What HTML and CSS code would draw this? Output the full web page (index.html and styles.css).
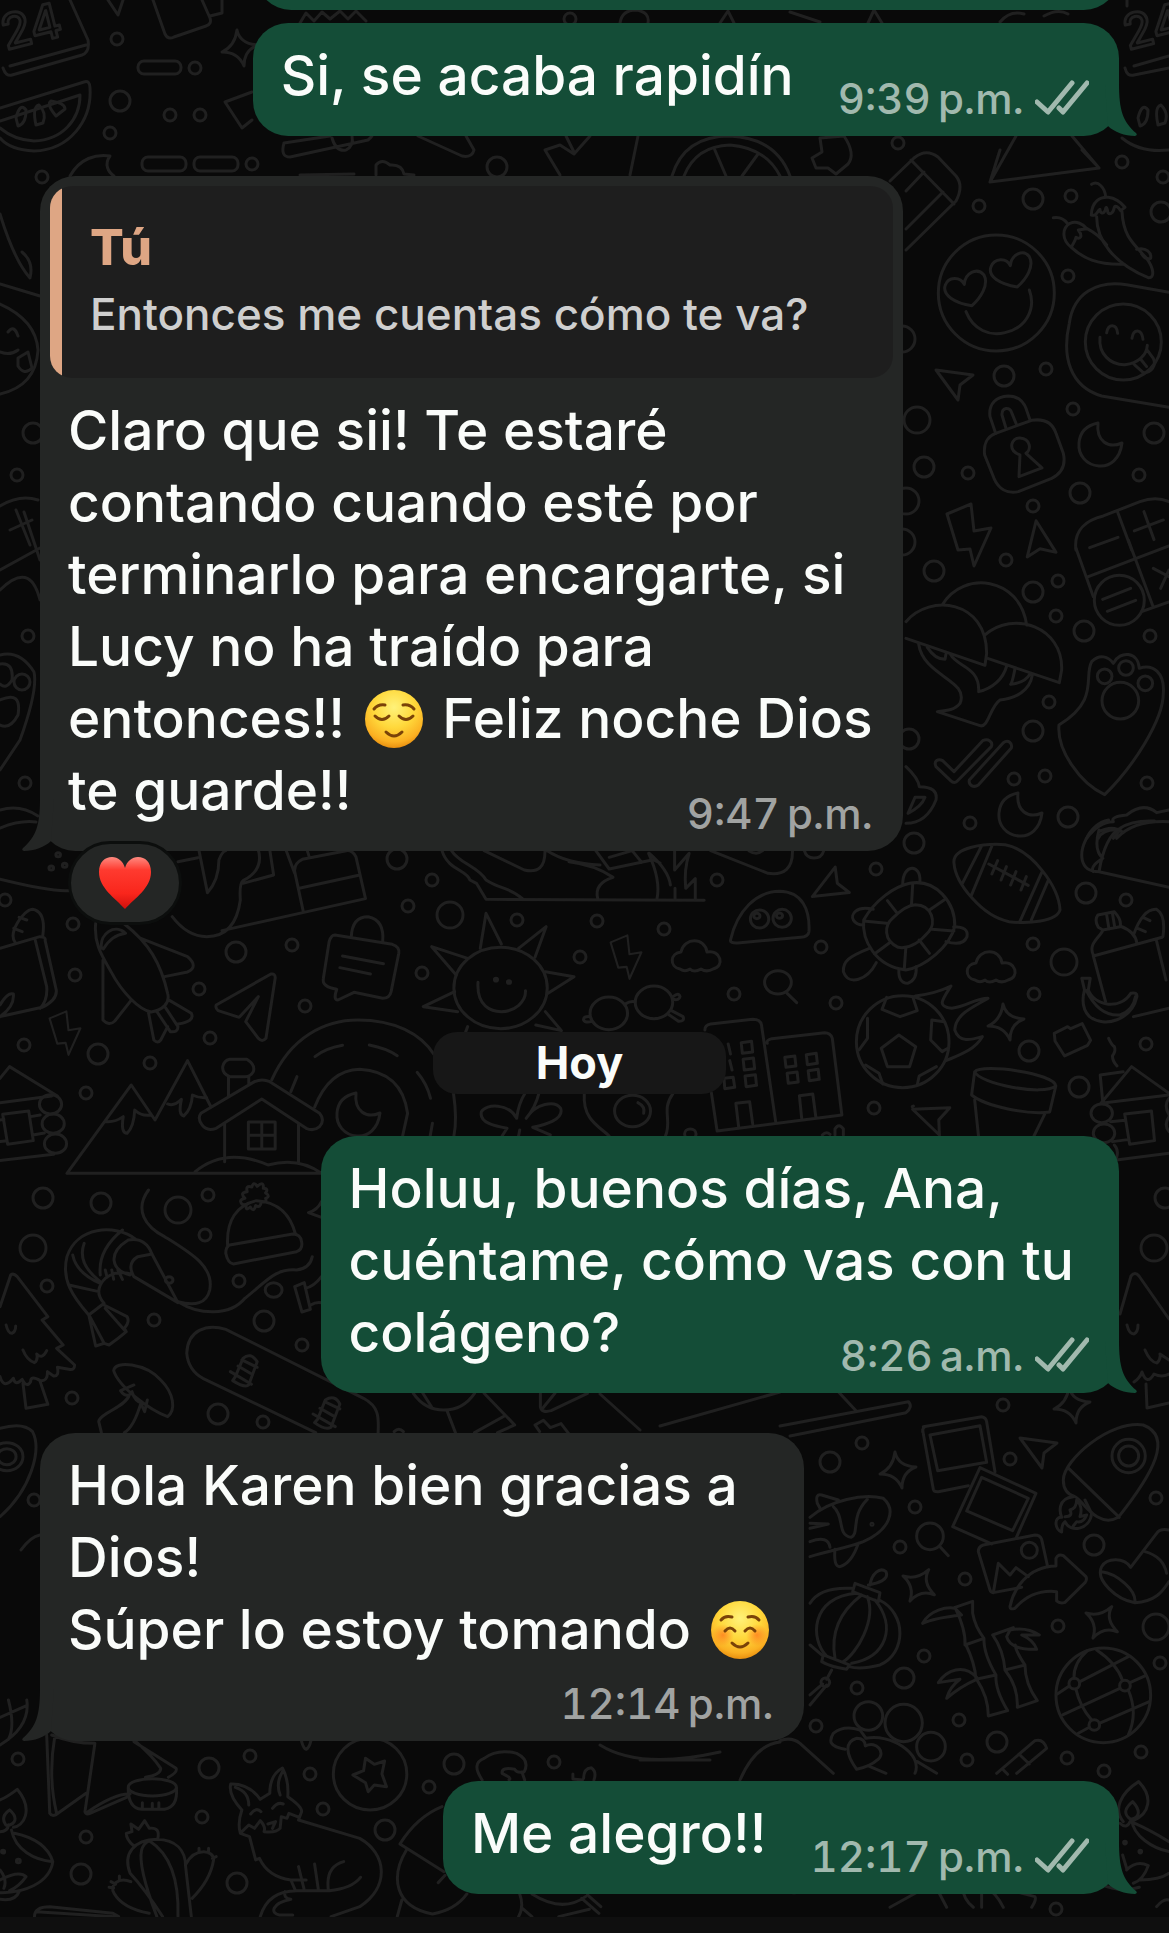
FILE: index.html
```
<!DOCTYPE html>
<html lang="es">
<head>
<meta charset="UTF-8">
<meta name="viewport" content="width=device-width, initial-scale=1">
<title>Chat</title>
<link rel="stylesheet" href="styles.css">
</head>
<body>

<!-- shared shapes -->
<svg class="defs" aria-hidden="true">
  <defs>
    <circle id="s" r="6"/>
    <circle id="m" r="10"/>
    <circle id="l" r="13"/>
    <path id="bolt" d="M-22,-38 L2,-48 L5,-21 L22,-24 L5,14 L1,-3 L-11,-2 Z"/>
    <path id="cursor" d="M-18,-10 L19,-5 L6,5 L4,20 Z"/>
    <path id="star" d="M-3,-18 Q0,-4 18,-3 Q4,2 4,18 Q-2,4 -18,4 Q-5,-2 -3,-18 Z"/>
    <path id="moon" d="M-2,-22 C-4,-4 8,4 22,-2 C20,14 10,22 -1,21 C-14,20 -22,10 -21,-2 C-20,-14 -12,-20 -2,-22 Z"/>
    <path id="cloud" d="M-17,12 C-28,10 -27,-4 -16,-5 C-13,-20 8,-20 10,-5 C24,-8 28,10 16,12 C11,15 7,14 4,12 C-1,15 -5,14 -7,12 C-10,14 -14,14 -17,12 Z"/>
    <path id="tail" d="M-14,-52 L0,-52 C0,-26 4,-14 17,-3 Q19,-1 16,0 C6,0 -5,-4 -11,-10 Z"/>
    <g id="ticks">
      <path d="M2,23 L13,33 L37,4"/>
      <path d="M24,29 L28,33 L52,4"/>
    </g>
    <radialGradient id="face" cx="50%" cy="30%" r="70%">
      <stop offset="0" stop-color="#fff27a"/>
      <stop offset=".5" stop-color="#ffd83b"/>
      <stop offset=".85" stop-color="#fbb022"/>
      <stop offset="1" stop-color="#e88f10"/>
    </radialGradient>
    <radialGradient id="blush">
      <stop offset="0" stop-color="#ff6a1a" stop-opacity=".65"/>
      <stop offset="1" stop-color="#ff6a1a" stop-opacity="0"/>
    </radialGradient>
    <linearGradient id="love" x2="0" y2="1">
      <stop offset="0" stop-color="#ff8a80"/>
      <stop offset=".25" stop-color="#ff3a2f"/>
      <stop offset=".7" stop-color="#f9261c"/>
      <stop offset="1" stop-color="#d0100c"/>
    </linearGradient>
  </defs>
</svg>

<svg class="wallpaper" viewBox="0 0 1169 1933" preserveAspectRatio="xMidYMin slice" aria-hidden="true">
  <!-- bubbles scattered between the doodles -->
  <g>
    <use href="#s" x="117" y="39"/><use href="#s" x="195" y="68"/><use href="#s" x="170" y="115"/><use href="#s" x="200" y="115"/><use href="#s" x="110" y="133"/><use href="#s" x="252" y="164"/><use href="#s" x="42" y="177"/><use href="#s" x="570" y="19"/><use href="#s" x="898" y="143"/><use href="#m" x="120" y="101"/><use href="#m" x="497" y="167"/>
    <use href="#s" x="979" y="206"/><use href="#s" x="1071" y="196"/><use href="#s" x="1122" y="162"/><use href="#s" x="1163" y="177"/><use href="#s" x="1068" y="276"/><use href="#s" x="1046" y="369"/><use href="#s" x="1073" y="409"/><use href="#s" x="968" y="473"/><use href="#s" x="1139" y="475"/><use href="#s" x="1033" y="506"/><use href="#s" x="17" y="475"/><use href="#s" x="28" y="636"/><use href="#s" x="25" y="783"/><use href="#m" x="33" y="433"/>
    <use href="#m" x="1033" y="199"/><use href="#m" x="1161" y="212"/><use href="#m" x="1004" y="376"/><use href="#m" x="1154" y="433"/><use href="#m" x="924" y="467"/><use href="#m" x="1080" y="493"/><use href="#l" x="917" y="420"/><use href="#l" x="902" y="339"/><use href="#l" x="906" y="501"/>
    <use href="#s" x="1006" y="560"/><use href="#s" x="1058" y="581"/><use href="#s" x="1056" y="616"/><use href="#s" x="1150" y="636"/><use href="#s" x="1049" y="702"/><use href="#s" x="1014" y="779"/><use href="#s" x="1045" y="776"/><use href="#s" x="1147" y="783"/><use href="#s" x="970" y="823"/>
    <use href="#m" x="934" y="571"/><use href="#m" x="1033" y="592"/><use href="#m" x="1084" y="631"/><use href="#m" x="1033" y="731"/><use href="#m" x="909" y="739"/><use href="#m" x="1068" y="817"/><use href="#l" x="902" y="542"/>
    <use href="#s" x="5" y="900"/><use href="#s" x="73" y="924"/><use href="#s" x="75" y="975"/><use href="#s" x="292" y="945"/><use href="#s" x="199" y="989"/><use href="#s" x="210" y="1038"/><use href="#s" x="305" y="1006"/><use href="#s" x="24" y="1045"/><use href="#s" x="150" y="1063"/><use href="#s" x="86" y="1093"/><use href="#s" x="432" y="880"/><use href="#s" x="408" y="906"/><use href="#s" x="517" y="920"/><use href="#s" x="422" y="973"/><use href="#s" x="580" y="957"/>
    <use href="#m" x="397" y="859"/><use href="#m" x="236" y="952"/><use href="#m" x="98" y="1054"/><use href="#l" x="450" y="915"/>
    <use href="#s" x="717" y="880"/><use href="#s" x="597" y="921"/><use href="#s" x="664" y="929"/><use href="#s" x="734" y="994"/><use href="#s" x="836" y="1003"/><use href="#s" x="821" y="947"/><use href="#s" x="876" y="869"/><use href="#s" x="874" y="1108"/><use href="#s" x="1126" y="900"/><use href="#s" x="1033" y="944"/><use href="#s" x="1034" y="994"/><use href="#s" x="1146" y="1044"/>
    <use href="#m" x="914" y="843"/><use href="#m" x="1086" y="893"/><use href="#m" x="1029" y="1051"/><use href="#m" x="1079" y="1087"/><use href="#l" x="1064" y="962"/>
    <use href="#s" x="208" y="1195"/><use href="#s" x="205" y="1235"/><use href="#s" x="47" y="1286"/><use href="#s" x="239" y="1281"/><use href="#s" x="154" y="1320"/><use href="#s" x="302" y="1345"/><use href="#s" x="72" y="1398"/><use href="#s" x="263" y="1422"/><use href="#s" x="34" y="1500"/>
    <use href="#m" x="43" y="1198"/><use href="#m" x="101" y="1203"/><use href="#m" x="264" y="1321"/><use href="#m" x="218" y="1414"/><use href="#m" x="1165" y="1198"/><use href="#l" x="33" y="1248"/><use href="#l" x="178" y="1210"/><use href="#l" x="1154" y="1248"/>
    <use href="#s" x="1003" y="1405"/><use href="#s" x="862" y="1443"/><use href="#s" x="1010" y="1459"/><use href="#s" x="915" y="1507"/><use href="#s" x="900" y="1547"/><use href="#s" x="965" y="1579"/><use href="#s" x="924" y="1656"/><use href="#s" x="857" y="1688"/><use href="#s" x="816" y="1726"/><use href="#s" x="959" y="1720"/><use href="#s" x="967" y="1760"/><use href="#s" x="1067" y="1758"/><use href="#s" x="1104" y="1771"/><use href="#s" x="1141" y="1752"/><use href="#s" x="1160" y="1663"/><use href="#s" x="1156" y="1498"/><use href="#s" x="1058" y="1626"/>
    <use href="#m" x="830" y="1462"/><use href="#m" x="1094" y="1545"/><use href="#m" x="997" y="1742"/><use href="#m" x="904" y="1678"/><use href="#l" x="1156" y="1627"/>
    <use href="#s" x="18" y="1759"/><use href="#s" x="250" y="1756"/><use href="#s" x="310" y="1774"/><use href="#s" x="323" y="1809"/><use href="#s" x="202" y="1817"/><use href="#s" x="86" y="1837"/><use href="#s" x="429" y="1787"/><use href="#s" x="554" y="1762"/><use href="#s" x="1056" y="1909"/>
    <use href="#m" x="209" y="1768"/><use href="#m" x="454" y="1764"/><use href="#m" x="385" y="1830"/><use href="#m" x="81" y="1874"/><use href="#m" x="237" y="1883"/>
  </g>
  <!-- repeated little shapes -->
  <g>
    <use href="#cursor" x="954" y="380"/>
    <use href="#cursor" x="1038" y="1448"/>
    <use href="#cursor" transform="translate(932 1116) rotate(-10)"/>
    <use href="#cursor" transform="translate(830 886) rotate(-60)"/>
    <use href="#cursor" transform="translate(1040 541) rotate(50)"/>
    <use href="#bolt" x="969" y="552"/>
    <use href="#bolt" transform="translate(65 1045) scale(.7)"/>
    <use href="#bolt" transform="translate(626 969) scale(.7)"/>
    <use href="#star" x="1006" y="1022"/>
    <use href="#star" x="1072" y="1405"/>
    <use href="#star" x="898" y="1470"/>
    <use href="#star" transform="translate(919 1585) rotate(42)"/>
    <use href="#star" transform="translate(1102 1622) rotate(42)"/>
    <use href="#star" x="240" y="48"/>
    <use href="#moon" x="1100" y="445"/>
    <use href="#moon" x="1020" y="815"/>
    <use href="#moon" x="358" y="1115"/>
    <use href="#cloud" x="697" y="957"/>
    <use href="#cloud" x="992" y="968"/>
  </g>
  <!-- calendar, melon, pencil and gift along the top -->
  <g>
    <text x="6" y="50" transform="rotate(-14 6 50)">24</text>
    <text x="1128" y="50" transform="rotate(-14 1128 50)">24</text>
    <path d="M70,0 L88,40 Q90,52 82,55 L12,75 Q6,77 3,68 M10,66 L86,45 M1127,0 V6 M1169,68 L1134,75 Q1127,77 1125,68 M1134,66 L1169,56"/>
    <path d="M0,108 L84,82 Q90,80 90,88 C92,120 70,150 34,151 Q10,150 0,138 M0,121 L80,95 C80,120 62,140 34,141 Q14,140 0,128"/>
    <path d="M16,118 q4,-16 10,-8 q0,14 -8,16 z M36,125 q-4,-18 3,-20 q8,8 4,18 z M56,116 q-10,-12 -5,-15 q14,2 14,8 z"/>
    <path d="M1138,118 q4,-16 10,-8 q0,14 -8,16 z M1158,125 q-4,-18 3,-20 q8,8 4,18 z M1122,138 Q1140,153 1169,150"/>
    <rect x="138" y="61" width="43" height="13" rx="6"/>
    <rect x="142" y="157" width="44" height="14" rx="6"/>
    <rect x="194" y="157" width="44" height="14" rx="6"/>
    <path d="M108,0 L118,15 L123,0 M153,0 L165,34 Q168,40 174,37 L206,26 Q212,24 210,18 L202,0 M210,16 L222,13 V0"/>
    <path d="M70,176 C80,158 96,154 110,156 C104,164 108,172 114,176"/>
    <path d="M225,102 L252,92 M225,102 L242,128 L252,120"/>
    <path d="M284,143 L330,136 M284,143 Q280,157 290,157 L368,140 Q376,134 370,130 M332,138 Q336,152 346,150 Q354,146 352,136"/>
    <path d="M418,136 L462,156 Q472,158 474,150 L466,136 M376,175 V165 Q382,158 390,165 Q402,164 404,174 L414,175 M300,175 L354,174"/>
    <path d="M545,150 L560,145 L574,154 L590,136 M545,150 L560,175 M638,136 L630,175 M566,136 L574,152"/>
    <path d="M672,176 Q684,136 730,136 Q776,138 790,176 M684,176 Q696,146 730,145 Q766,148 780,176 M714,148 L726,176 M758,154 L742,176"/>
    <path d="M812,158 l10,-6 l-2,-14 l24,-2 q12,18 4,28 l-12,10 l-8,-6 l-12,0 z"/>
    <path d="M300,23 l6,-10 l8,8 l8,-9 l8,7 l10,-8 l8,8 l8,-8 l10,10 M620,23 Q622,10 636,10 Q650,12 648,23 M720,23 l8,-12 l6,12 M790,12 l30,10 M868,23 l6,-13 l8,13 M1000,22 q10,-12 24,-8 M1044,16 q14,-8 24,-2"/>
    <path d="M1000,150 L990,182 L1099,168 L1082,150 M1016,136 L990,182 M1072,136 L1099,168"/>
    <path d="M890,181 L914,158 Q926,148 938,157 L956,176 Q964,186 956,201 L906,250 M911,160 L954,204 M924,172 L906,191 M943,192 L906,229"/>
    <path d="M0,214 Q14,260 30,278 Q34,262 22,252 M0,284 L40,296 M0,304 Q36,320 38,350 Q36,386 0,394"/>
    <path d="M8,332 q6,-8 10,4 M18,358 l10,-6 l4,16 q-8,8 -14,-2 z M0,352 Q10,356 18,350"/>
  </g>
  <!-- hearts face, chillies, tongue face, padlock -->
  <g transform="translate(880 150) scale(.3333)">
    <circle cx="349" cy="429" r="174"/>
    <path d="M276,467 C225,460 185,435 196,405 C205,380 240,378 253,403 C255,370 290,350 312,375 C328,405 300,445 276,467 Z M412,411 C360,402 322,380 333,350 C343,323 380,322 391,347 C394,314 430,295 448,320 C464,350 438,388 412,411 Z M258,485 C280,540 330,560 375,548 C435,535 470,480 448,420"/>
    <path d="M635,103 C655,90 675,115 677,140 M634,195 C635,155 660,140 685,142 C710,145 725,160 735,172 L722,182 C715,170 705,165 703,172 C700,190 690,195 684,188 C682,175 678,165 676,180 C670,195 660,190 660,178 C650,185 650,200 634,195 M650,200 C650,270 700,340 805,383 C825,385 822,355 800,325 C760,280 730,260 726,185 M770,298 C800,290 815,310 812,325 C800,330 790,320 785,312"/>
    <path d="M520,203 C540,200 555,210 562,220 M574,292 C545,270 545,235 570,220 C590,212 610,222 620,236 L595,240 C610,260 600,270 588,262 C585,275 580,280 574,292 C610,325 650,345 730,343 M620,235 C650,250 665,265 680,285"/>
    <path d="M867,427 L740,404 C650,390 580,430 568,520 C545,620 570,710 665,738 L867,772"/>
    <circle cx="730" cy="576" r="114"/>
    <path d="M680,548 C685,520 710,520 713,550 M756,565 C760,535 785,535 789,568 M660,562 C655,610 690,645 735,644 C775,640 800,615 802,586 M764,645 L790,668 C815,670 830,645 820,625 L803,602 M784,630 L800,650"/>
    <path d="M347,850 L330,800 C325,760 350,740 385,738 C415,738 430,755 438,775 L450,810 M378,835 L366,795 C365,770 390,770 395,788 L410,825"/>
    <path d="M347,850 L455,811 C495,805 518,820 528,850 L550,910 C558,945 545,970 515,985 L415,1025 C380,1032 355,1015 342,985 L314,915 C310,885 320,860 347,850 Z M417,980 L420,915 C380,900 395,862 420,864 C452,866 455,900 438,910 L486,954 Z"/>
    <path d="M588,1200 C580,1140 620,1110 670,1098 L780,1055 C820,1040 845,1045 867,1055 M712,1084 L755,1200 M763,1143 L850,1110 M792,1085 L822,1169 M629,1193 L714,1162"/>
  </g>
  <!-- calculator bottom, mushrooms, paw, ticks -->
  <g transform="translate(880 520) scale(.3333)">
    <path d="M588,85 L640,230 M625,170 L867,78 M745,60 L820,262 M785,275 L867,246 M668,238 L752,205 M682,274 L767,241 M820,145 L867,170 M842,205 L867,150"/>
    <circle cx="718" cy="241" r="75"/>
    <path d="M188,253 C250,150 420,170 440,315 M78,305 C150,220 320,240 320,400 L315,436 L78,355 M315,345 C400,270 550,320 545,450 L538,488 L325,416"/>
    <path d="M116,372 C130,470 270,480 240,550 C225,570 200,572 172,575 L300,617 C325,625 330,560 360,540 C410,535 450,510 457,465 M142,382 C160,410 180,418 195,418 L198,402 M212,404 C230,440 300,440 296,515 C340,505 370,475 380,438 M405,446 C400,470 398,485 392,493 C420,490 440,480 450,462"/>
    <path d="M674,824 C600,790 530,690 537,615 C660,540 610,470 635,425 C660,400 685,410 700,430 C720,390 775,395 778,445 C820,430 855,460 850,520 C850,600 760,740 674,824 Z"/>
    <circle cx="674" cy="469" r="22"/><circle cx="738" cy="444" r="22"/><circle cx="796" cy="490" r="22"/><circle cx="721" cy="542" r="55"/>
    <path d="M168,740 C160,722 175,715 188,722 L222,755 L308,662 C325,655 340,665 334,680 L232,783 C225,790 218,788 212,782 Z M268,780 L370,668 C385,658 398,670 394,684 L295,795 C280,805 265,795 268,780 Z"/>
    <path d="M78,740 Q115,775 118,800 Q175,800 168,840 Q140,910 78,910 M84,880 L105,832 L135,832 Q125,860 84,880 Z M620,955 C650,915 680,905 700,905 Q690,890 740,885 Q790,845 830,878 L867,870 M655,955 Q670,925 720,930 L700,955 M710,955 Q760,900 867,905"/>
  </g>
  <!-- left edge fragments of the same tile -->
  <path d="M0,506 Q20,494 38,500 M0,570 L40,548 M0,590 Q30,560 40,600 M24,512 L40,560 M10,530 L32,520 M16,510 L30,545 M0,655 Q20,650 34,672 Q38,690 20,740 L0,770 M0,700 Q22,690 18,715 Q10,730 0,725 M22,682 m-8,0 a8,8 0 1,0 16,0 a8,8 0 1,0 -16,0 M0,664 Q14,662 12,680 Q6,690 0,684 M0,810 Q20,804 38,816 M0,828 Q20,820 36,822"/>
  <!-- rocket, paper plane, bag, sun, house and mountains -->
  <g transform="matrix(.3827 0 0 .3333 0 820)">
    <path d="M0,178 C60,195 140,215 180,212 M0,385 L104,350 Q120,350 118,362 L147,510 Q150,540 110,562 L0,590 M92,360 L122,500 Q125,540 105,565 M40,368 C20,340 60,270 85,268 Q120,275 112,345 M50,292 l20,8 M36,325 l22,10 M0,555 Q20,515 35,522 Q38,560 0,590"/>
    <circle cx="152" cy="104" r="6"/><circle cx="169" cy="136" r="6"/><circle cx="134" cy="144" r="6"/>
    <path d="M250,310 C245,370 265,405 290,455 C320,520 365,570 395,576 C425,570 445,550 438,520 C420,430 390,370 325,312 M265,385 C260,340 300,310 328,340 C300,345 285,360 270,387 M368,355 L490,410 Q520,440 490,456 L430,470 M269,420 V600 Q285,620 300,603 L342,542 M388,578 L402,660 Q412,672 420,660 L438,620 M410,575 L445,635 Q465,638 465,620 L432,562 M444,542 L500,580 Q510,605 465,612"/>
    <path d="M565,555 L708,462 Q720,460 719,475 L695,655 Q685,668 675,655 L642,605 L675,530 L625,592 L570,572 Q562,565 565,555 Z"/>
    <path d="M875,345 L1025,373 Q1045,380 1042,400 L1022,515 Q1018,535 1000,535 L925,517 L883,540 Q870,540 880,508 Q840,500 845,475 L860,365 Q865,345 875,345 Z M918,350 Q920,290 962,290 Q1005,300 1000,365 M895,408 L1002,431 M888,443 L968,462"/>
    <path d="M450,290 Q490,350 540,350 Q615,350 628,240 Q625,190 635,182 Q690,150 675,90 M520,92 L542,218 Q572,180 572,120 Q580,95 590,92 M465,125 l52,-12 M635,190 L715,165 L705,90 M580,332 L955,236 L930,110 Q920,90 905,92 L790,118 Q768,130 770,155 L792,272 M782,205 L940,165 M748,92 L770,160 M803,92 l4,15"/>
    <circle cx="1308" cy="504" r="122"/>
    <path d="M1255,385 L1270,280 L1310,372 M1355,385 L1427,320 L1398,412 M1425,455 L1500,470 L1432,520 M1222,415 L1128,380 L1192,465 M1188,515 L1106,560 L1196,575 M1425,575 L1467,632 L1400,615 M1222,620 l-5,15 M1249,487 C1245,560 1285,575 1310,575 C1345,575 1375,545 1373,512"/>
    <circle cx="1296" cy="479" r="4"/><circle cx="1330" cy="486" r="4"/>
    <path d="M1155,92 C1170,150 1220,150 1228,180 L1245,190 L1270,238 L1840,241 M1180,92 C1200,130 1250,140 1270,180 C1310,210 1330,200 1365,236 M1265,92 L1370,150 Q1425,165 1424,92 M1430,92 Q1480,130 1568,135"/>
    <path d="M710,780 C760,650 850,600 935,600 C1030,600 1100,640 1135,705 M1185,820 Q1195,900 1186,948 M760,815 l16,-45 M823,710 Q850,685 895,676 M965,675 Q1010,685 1038,707 M1090,757 Q1115,790 1125,835 M1130,910 l-6,38 M822,862 Q860,750 940,748 Q1050,755 1065,880 L1052,948"/>
    <path d="M0,775 L25,740 L150,828 M0,848 L135,828 M7,883 L75,873 L87,962 L20,973 Z M80,890 l25,-5 M86,945 l30,-6 M0,900 l10,-2 M0,965 l14,-2 M0,1022 L140,1003"/>
    <circle cx="132" cy="853" r="29"/><circle cx="139" cy="911" r="29"/><circle cx="145" cy="971" r="29"/>
    <path d="M175,1060 L343,795 L405,900 L490,722 L550,858 M275,905 Q300,908 322,890 Q315,940 332,940 Q350,920 352,870 Q370,890 395,885 M438,852 Q455,860 474,838 Q465,885 480,888 Q500,870 503,825 Q520,835 540,833 M175,1060 H840 M510,1055 Q590,980 700,1035 Q780,1010 840,1060"/>
    <path d="M525,880 L665,785 Q685,775 705,785 L835,880 Q850,900 835,920 Q820,935 800,925 L684,837 L565,925 Q540,935 528,915 Q515,895 525,880 Z M587,910 V1025 M780,910 V1025 M597,830 V770 M650,790 V770 M600,718 H645 Q668,735 662,755 Q655,770 640,770 H600 Q580,760 582,740 Q585,722 600,718 Z M649,906 H719 V987 H649 Z M684,906 V987 M649,946 H719"/>
    <path d="M1350,895 C1330,850 1270,850 1258,875 C1250,910 1300,920 1325,925 L1312,948 M1350,895 Q1355,850 1372,820 M1375,895 Q1400,860 1408,820 M1375,895 C1400,850 1450,840 1465,865 C1475,900 1420,915 1392,922 L1438,945 M1358,930 l-3,18"/>
  </g>
  <!-- ghost, turtle, football, glasses, town, ball, cup, cabin -->
  <g transform="matrix(.3827 0 0 .3333 569 820)">
    <path d="M0,125 Q70,135 115,172 Q65,190 75,236 M70,92 l35,55 l115,-28 l18,10 M105,112 l60,-20 l25,35 M208,100 Q240,180 230,236 M210,100 Q260,150 265,195 M276,92 V150 L314,100 Q300,150 305,205 L330,176 V236 M277,205 V236"/>
    <path d="M370,92 L520,160 Q585,170 584,92 M615,92 q5,22 25,22 q20,0 25,-20 M470,92 q20,15 36,0"/>
    <path d="M422,360 C440,270 490,215 550,214 C610,215 630,270 627,335 Q625,350 605,352 L440,369 Q420,370 422,360 Z"/>
    <ellipse cx="498" cy="297" rx="24" ry="27"/><ellipse cx="557" cy="295" rx="24" ry="27"/><circle cx="491" cy="288" r="8"/><circle cx="550" cy="287" r="8"/>
    <path d="M890,190 C960,175 1010,250 1008,320 C995,380 930,440 880,450 C800,440 765,360 770,300 C800,240 850,200 890,190 Z M905,254 C950,255 960,310 940,335 Q900,390 860,382 C820,360 825,315 845,295 Q880,255 905,254 Z M898,195 L895,253 M832,242 L858,280 M776,304 L830,310 M798,402 L836,370 M876,448 L880,385 M942,400 L915,360 M1006,333 L948,328 M980,240 L942,270"/>
    <path d="M872,192 C872,130 920,130 917,185 M795,268 C750,255 735,285 743,300 Q750,315 770,315 M785,385 C730,410 715,425 717,455 C730,500 780,480 803,428 M862,448 Q860,490 885,490 Q910,480 907,440 M1005,320 Q1045,320 1040,350 Q1030,380 985,365"/>
    <path d="M1006,130 C1000,80 1090,70 1140,74 C1210,90 1280,200 1283,270 C1275,305 1200,312 1150,305 C1080,290 1010,190 1006,130 Z M1078,78 L1028,190 M1105,78 L1050,230 M1235,158 L1178,305 M1252,182 L1208,300 M1097,132 L1200,196 M1120,122 l-15,40 M1143,140 l-14,40 M1168,155 l-14,40 M1195,170 l-14,40"/>
    <path d="M1385,155 C1330,155 1335,95 1350,60 Q1370,10 1410,0 M1385,155 L1568,202 M1385,155 Q1400,50 1440,25 Q1470,0 1530,3 M1385,30 Q1370,90 1395,115 Q1360,140 1370,155 M1445,35 Q1420,15 1385,35"/>
    <circle cx="104" cy="580" r="49"/><circle cx="222" cy="547" r="49"/>
    <path d="M147,552 q12,-10 26,-7 M55,590 q-18,-2 -17,10 q5,10 22,4 M272,530 q15,-15 18,0 q-2,12 -18,8 M268,572 l30,18 q5,15 -12,14 l-25,-20"/>
    <circle cx="546" cy="487" r="35"/><path d="M570,520 L595,548"/>
    <path d="M355,630 Q355,615 370,612 L480,598 Q500,598 503,615 L540,905 M372,818 L387,933 L713,885 L688,655 Q684,638 668,638 L530,656 Q515,660 518,670 M450,668 l27,-4 l3,32 l-27,4 z M455,718 l27,-4 l3,32 l-27,4 z M460,768 l27,-4 l3,32 l-27,4 z M564,712 l26,-4 l3,30 l-26,4 z M620,704 l26,-4 l3,30 l-26,4 z M570,760 l26,-4 l3,30 l-26,4 z M625,752 l26,-4 l3,30 l-26,4 z M443,918 L436,850 L472,845 L480,912 M608,895 L602,827 L637,822 L645,892 M416,672 l6,30 M420,722 l6,28 M405,775 l24,-3 l4,30 l-26,4 z"/>
    <path d="M40,820 C35,900 80,920 105,948 M272,820 C240,870 270,900 252,948 M180,848 Q200,860 195,880"/><circle cx="166" cy="873" r="47"/><circle cx="317" cy="942" r="15"/>
    <ellipse cx="872" cy="665" rx="121" ry="138"/>
    <path d="M862,645 L906,680 L890,740 L832,740 L816,685 Z M830,532 L818,568 L865,590 L910,572 L898,530 M948,600 L945,660 L975,695 L990,685 M948,600 L980,605 M780,595 L780,655 L758,690 M775,735 L810,760 L820,792 M910,795 L915,768 L960,740 M905,528 Q960,520 998,498 C975,540 960,560 1000,565 C1040,560 1060,535 1095,535 C1060,560 1010,580 1008,630 C1020,670 1050,660 1080,650 C1060,690 1020,705 985,722"/>
    <path d="M1370,405 C1355,370 1390,350 1395,330 L1383,322 Q1372,300 1382,285 L1425,275 Q1445,300 1440,320 L1395,330 M1440,318 Q1480,335 1484,370 M1370,408 L1550,352 M1370,408 L1402,545 M1475,590 L1568,565 M1475,345 Q1500,265 1535,268 Q1560,285 1552,350 M1500,292 l18,10 M1486,325 l20,10 M1535,362 L1560,480 M1405,285 l6,42 M1420,280 l6,42"/>
    <path d="M1340,475 h22 l-5,35 C1375,560 1440,570 1468,520 Q1485,515 1484,530 C1470,600 1400,625 1360,590 Q1335,560 1347,510 Z M1352,512 Q1385,590 1440,585 Q1475,570 1480,530"/>
    <path d="M1268,640 l35,-20 l8,6 l30,-15 l22,50 l-8,15 l-60,32 l-25,-45 z M1410,655 q8,20 15,25 q5,12 -5,28 q0,15 12,30"/>
    <path d="M1060,755 C1080,730 1270,760 1272,798 C1240,830 1070,790 1060,755 L1052,825 C1090,860 1200,885 1256,876 L1272,798 M1060,840 L1070,948 M1244,880 L1215,948"/>
    <path d="M1395,850 L1388,765 L1448,755 M1390,850 L1470,740 L1568,820 M1390,850 L1568,825 M1452,882 L1522,873 L1530,962 L1465,973 Z M1415,905 l38,-4 M1420,965 l40,-6 M1430,1020 L1568,1000 M1568,835 q-15,20 0,50 M1568,890 q-15,25 0,45"/>
    <circle cx="1392" cy="880" r="28"/><circle cx="1398" cy="940" r="28"/><path d="M1425,975 q12,15 6,38 M662,945 q10,-12 20,-2 M695,945 v-18 q10,-20 22,0 v18 M897,860 l3,-2"/>
  </g>
  <path d="M1124,1108 m-6,20"/>
  <!-- prawn, hat, tree, snowboard, mushroom -->
  <g transform="matrix(.3827 0 0 .3333 0 1130)">
    <path d="M388,180 C350,240 380,290 430,320 C500,370 560,410 548,480 C540,520 510,530 465,515 C520,555 600,560 640,505 C700,450 720,415 775,420 Q810,415 816,380"/>
    <path d="M465,518 L350,440 Q330,400 360,380 L397,372 M340,435 C290,420 280,370 335,330 Q380,320 397,372 L465,518 M355,328 C300,280 200,290 175,380 C160,450 190,500 232,555 L272,520 C240,480 270,440 300,430 Q330,425 342,432 M262,435 Q255,360 320,300 M262,455 Q200,400 220,340 M258,485 L180,465 M190,375 Q200,430 262,460 M232,555 L250,648 L272,640 L235,560 M272,640 L285,645 Q310,625 330,605 L325,595 Q340,575 332,560 L272,525 M275,535 L325,600 M275,420 l5,22 M292,420 l5,28 M308,420 l12,28"/>
    <circle cx="442" cy="450" r="10"/>
    <path d="M595,350 C590,270 620,225 670,212 C730,215 760,260 772,312 M600,345 L765,312 Q785,312 788,335 Q792,358 775,365 L610,402 Q595,400 590,370 Q590,350 600,345 Z M635,225 q-15,-15 5,-20 q-15,-18 6,-20 q-5,-20 12,-14 q5,-18 14,-2 q18,-18 16,6 q15,0 6,14 q14,10 0,16 q5,15 -12,10 q0,20 -14,12 q-5,22 -14,4 q-14,15 -10,-8 z"/>
    <circle cx="715" cy="480" r="22"/>
    <path d="M770,470 l25,-12 l16,80 l-22,8 z M798,475 Q820,470 840,440 M812,525 Q825,515 840,518 M840,215 Q830,240 806,248 L840,262"/>
    <path d="M0,530 L28,435 Q35,428 45,440 L125,560 L110,570 L165,645 L148,655 L195,705 Q195,722 180,718 L150,712 Q155,740 140,738 L124,725 Q125,755 105,752 Q80,735 80,755 Q70,775 58,748 Q40,770 35,745 Q10,780 0,740 M60,760 L68,835 L125,823 L105,755 M16,585 q5,25 15,25 q10,-5 10,-22 M60,660 Q70,690 90,698 Q100,690 96,672 Q110,690 122,662"/>
    <path d="M488,670 C490,600 540,580 590,598 L950,805 C990,830 990,860 988,908 M488,670 Q492,720 530,745 L825,908"/>
    <path d="M615,740 L635,685 Q655,665 672,695 L650,765 Q640,775 608,752 Z M622,708 l32,22 M602,725 l55,38 M632,690 l40,22 M830,868 L850,810 Q875,792 888,822 L865,892 Q850,902 822,878 Z M836,835 l34,22 M818,852 l58,38 M848,815 l40,22"/>
    <path d="M297,722 C300,690 380,700 420,750 C455,790 460,840 438,860 C390,840 310,770 297,722 Z M350,765 L315,782 Q325,800 338,795 C330,830 260,850 258,875 L265,908 M325,908 Q350,890 368,820 L378,845 L385,810 M345,785 Q352,815 372,820"/>
    <path d="M0,895 Q60,875 85,905 C110,960 80,1080 0,1160 M55,1260 Q80,1220 104,1215"/>
    <circle cx="18" cy="980" r="24"/><circle cx="18" cy="980" r="42"/>
    <path d="M1080,790 Q1110,840 1160,840 Q1210,840 1240,790 M1105,790 L1130,835 M1168,842 L1190,908 M1265,790 L1345,885 L1300,908 M1240,908 L1318,858 M1412,790 V830 Q1415,850 1440,842 L1535,790 M1418,835 L1450,790 M1410,905 l-12,-20 l22,-14 l18,22 l28,-12 l20,30 M1030,905 q12,-14 24,0"/>
  </g>
  <!-- the same tree coming back at the right edge -->
  <path d="M1120,1314 L1131,1276 Q1135,1271 1139,1276 L1169,1319 M1127,1325 q2,9 7,9 q4,-2 4,-9 M1145,1350 q5,12 12,13 q4,-4 3,-9 l9,6 M1134,1382 q6,-4 8,-10 q5,14 12,2 q8,4 15,0 M1146,1384 L1147,1408 L1169,1403"/>
  <path d="M600,1394 L640,1430 M660,1426 L780,1392"/>
  <!-- laptop, photos, rocket, fish, lantern, bamboo, globe, lamp -->
  <g transform="translate(780 1400) scale(.3333)">
    <path d="M0,78 L385,5 Q400,20 378,38 L30,108 M170,-30 L228,32"/>
    <path d="M-60,-30 L-60,-60 M430,80 L605,50 Q618,52 620,65 L645,215 M428,95 Q428,82 436,80 M428,90 L460,268 Q462,276 475,275 L565,257 M450,105 L600,77 L620,187 L473,212 Z"/>
    <path d="M600,203 L768,280 L708,415 M600,203 L518,380 L635,432 M605,232 L745,295 L698,392 L560,333 Z"/>
    <path d="M640,578 Q632,578 630,570 L595,455 Q595,440 610,435 L765,405 Q780,405 785,418 L803,500 M640,578 L725,562 M640,578 L655,490 L690,525 L708,503 L745,530"/><circle cx="748" cy="451" r="24"/>
    <path d="M690,620 C700,570 740,500 828,498 V475 Q835,460 850,467 L918,530 Q922,540 915,548 L855,607 Q840,612 830,603 V575 C780,570 740,585 705,625 Q690,630 690,620 Z"/>
    <path d="M850,240 C850,180 990,60 1090,75 C1180,110 1120,220 1015,352 C950,390 900,290 885,290 Q850,280 850,240 Z M866,205 L1018,352"/>
    <circle cx="1046" cy="168" r="50"/><circle cx="1046" cy="168" r="30"/>
    <path d="M1167,390 Q1140,385 1130,400 L1052,502 C1030,470 980,475 965,500 C945,540 1010,600 1065,608 C1130,605 1150,570 1167,545 M965,515 C1010,520 1070,570 1065,608 M1095,455 Q1150,470 1160,520"/>
    <path d="M880,290 C830,295 840,340 845,352 C820,350 825,390 845,396 Q845,372 855,365 C870,400 930,390 935,340 L915,300 M880,378 L890,365 Q910,370 920,345 L900,350 Q910,320 890,300 Q890,325 870,330 Q880,350 855,350"/>
    <path d="M90,352 C150,300 250,280 310,295 C350,330 330,390 250,425 C200,445 150,450 90,470 M112,310 Q105,280 125,285 L175,300 M112,310 L120,325 M160,320 C195,350 170,405 213,412 C240,400 210,350 262,298 M90,370 L145,372 L90,385 M90,425 Q145,405 150,442 M165,448 Q160,500 180,500 Q215,490 235,430"/>
    <circle cx="276" cy="373" r="3"/>
    <circle cx="450" cy="409" r="40"/><path d="M478,438 L505,467"/>
    <path d="M90,610 Q120,560 215,565 M298,600 C380,640 380,760 300,795 Q240,810 208,800 M90,735 L125,765 M225,550 L300,578 L295,605 L218,575 Z M130,765 L208,795 L200,808 Q150,800 125,785 Z M265,555 C290,550 330,540 318,515 C300,500 275,520 270,555 M230,580 C90,590 90,720 140,768 M245,585 C160,650 155,720 165,775 M262,590 C290,660 230,760 190,785 M285,600 C350,680 320,770 215,790 M155,810 L140,838 M90,885 L128,852 M90,915 L140,855"/>
    <circle cx="136" cy="847" r="13"/>
    <path d="M428,670 C450,630 500,620 525,625 L545,645 C500,650 460,655 428,670 M525,622 L578,604 L578,640 Q585,680 612,715 L555,735 Q558,690 525,622 Z M612,715 Q610,760 648,825 L588,838 Q585,790 558,735 M648,825 Q645,870 683,932 L625,948 Q625,890 590,838 M590,832 C550,790 500,810 475,848 L540,838 Q510,860 500,895 Q540,860 590,838"/>
    <path d="M638,705 L700,683 M638,705 Q670,750 675,810 L735,795 Q705,750 706,735 M735,795 Q735,850 772,902 L712,922 Q715,860 675,810 M690,690 Q740,680 778,705 L725,705 Q760,720 770,748 Q690,750 680,710 Z"/>
    <circle cx="970" cy="886" r="142"/><circle cx="883" cy="851" r="16"/><circle cx="1035" cy="857" r="16"/><circle cx="943" cy="975" r="16"/>
    <path d="M922,752 Q880,790 882,835 M888,868 Q900,920 935,960 M950,750 Q1010,790 1028,842 M1045,870 Q1075,940 1045,1005 M832,882 L868,858 M900,845 L1045,770 M848,945 L1020,865 M1050,848 L1095,828 M895,1000 L928,982 M958,970 L1108,905"/>
    <circle cx="265" cy="948" r="43"/><circle cx="371" cy="969" r="56"/><circle cx="453" cy="1040" r="43"/>
    <path d="M195,1048 C150,1040 145,1025 160,1000 Q190,975 240,990 L258,1015 C330,1000 430,1060 405,1120 M412,1085 L470,1120 M230,1108 C195,1060 195,1025 230,1015 Q255,1015 256,1038 C290,1020 320,1060 292,1080 Q270,1100 230,1108 Z M270,1100 L318,1120 M0,1022 Q35,1010 60,1030 L160,1120 M650,1120 L765,1022 Q790,1015 800,1045 L710,1120 M720,1065 L748,1092 M668,1108 l15,15"/>
    <path d="M1030,1265 C1000,1230 1020,1180 1076,1145 C1120,1190 1110,1240 1060,1262 M1058,1205 C1090,1240 1070,1255 1052,1258 C1025,1240 1040,1220 1058,1205 Z M1055,1258 C1060,1310 1120,1345 1167,1355 M1020,1270 Q1040,1290 1052,1262 M1060,1268 Q1110,1290 1167,1325 M1040,1410 Q1070,1380 1105,1397 Q1090,1440 1060,1450 M960,1452 Q1020,1480 1078,1462 M1080,1440 Q1140,1440 1167,1420 M1028,1365 l12,40"/>
    <circle cx="1035" cy="1328" r="4"/><circle cx="1081" cy="1355" r="4"/>
    <path d="M5,1455 q20,30 45,22 q25,0 33,-22 M178,1455 q0,20 20,20 h50 q25,0 28,-20 M330,1522 L445,1458 M470,1465 l30,57 M545,1455 Q550,1500 580,1522 M605,1455 V1522 M610,1455 Q650,1480 670,1522 M630,1455 L765,1490 Q770,1500 755,1522 M1130,1520 q20,-25 37,-20 M480,1460 L530,1450"/>
  </g>
  <!-- map, cactus, fox, coin -->
  <g transform="matrix(.3827 0 0 .3333 0 1700)">
    <path d="M122,105 L130,340 Q135,350 145,345 L225,280 M143,110 Q125,230 148,340 M135,105 Q190,130 248,130 L222,335 Q225,345 235,340 L335,290 M350,125 L460,205 Q465,215 440,232 M355,125 Q400,170 420,205 Q420,225 380,232 M230,335 Q300,280 340,282"/>
    <ellipse cx="398" cy="262" rx="63" ry="26"/><path d="M335,265 Q335,325 370,328 H430 Q465,320 461,265 M372,308 v18 M398,310 v18 M415,308 v18"/>
    <path d="M0,300 Q20,290 45,268 C90,330 60,380 35,382 M25,330 C55,360 30,380 15,375 Q0,350 25,330 M30,390 C40,450 90,480 138,485 M38,400 Q120,420 138,485 C130,550 60,580 0,578 M0,395 q20,0 22,-20 M0,540 Q50,510 68,530 Q50,560 25,572 M0,598 Q40,605 50,575 M0,510 q20,30 10,55 M70,0 Q80,80 0,135 M22,0 Q40,80 22,118 M0,52 L68,18"/>
    <circle cx="8" cy="455" r="4"/><circle cx="48" cy="483" r="5"/>
    <path d="M425,650 Q380,570 340,520 C320,460 350,420 410,418 C460,420 485,450 485,500 L500,650 M465,650 Q470,480 390,422 M410,650 Q360,500 370,450 Q375,430 390,422 M350,438 Q330,420 330,400 L345,395 L342,372 L362,388 L378,362 L390,385 Q420,380 412,418 M486,492 C510,440 560,450 558,480 Q550,540 502,595 M342,545 C310,530 285,555 298,580 Q320,625 390,640 M520,445 v12 M545,445 v14 M555,475 l10,-5 M312,528 v12 M290,545 l12,8 M285,562 l12,2"/>
    <path d="M632,330 C600,290 600,265 603,252 Q650,250 680,298 L705,280 C705,240 720,215 738,204 Q755,240 752,290 Q790,320 788,335 L780,360 L940,415 C1010,460 1020,560 940,620 L865,650 M632,330 Q620,370 628,400 L652,410 L668,480 L678,475 Q700,530 760,540 H800 M760,540 L772,572 H860 Q920,565 942,532 M780,500 L795,570 M822,492 L832,570 M858,570 Q850,500 898,485 M680,650 Q700,570 780,572 M745,575 Q740,595 760,598 C710,610 705,640 730,645 H765 M632,395 L650,375 L665,385 L680,362 Q695,380 690,395 Q720,400 732,385 L735,350 L750,355 L755,340 L782,352 M655,342 Q670,320 682,335 M712,325 Q725,305 740,312 M700,372 L720,365 L712,385 M615,262 Q650,275 650,315 M738,215 Q720,250 732,285"/>
    <ellipse cx="967" cy="222" rx="96" ry="108"/>
    <path d="M955,175 L978,193 L1005,183 L998,222 L1010,260 L978,255 L962,275 L955,248 L922,225 L950,212 Z"/>
    <path d="M1155,320 Q1090,350 1045,432 L1160,515 M1062,450 C1020,530 1030,620 1130,642 Q1190,630 1220,582 M1050,600 L1038,650 M1145,548 l18,-22 M1358,582 Q1370,620 1355,650 M1390,582 Q1470,640 1530,590 M1520,595 l45,45 M1535,585 l35,35 M1365,625 l25,25 M1460,650 l80,-22 M1260,240 Q1230,190 1265,175 Q1300,145 1350,160 Q1385,180 1370,215 Q1350,220 1345,208 Q1310,200 1312,220 Q1340,235 1330,240 M1365,220 l6,20 M1497,222 v15 l25,3 M1525,235 Q1525,205 1545,203 Q1560,215 1552,240 M788,124 q5,22 12,24 q8,-5 12,-24 M90,650 Q90,620 130,620 L295,640 L310,650 M95,635 L300,650"/>
  </g>
  <path d="M600,1745 Q640,1770 720,1752 M640,1760 h70 M740,1780 Q755,1745 780,1742"/>
</svg>

<main class="chat">
  <div class="msg out older" aria-hidden="true"></div>

  <article class="msg out tight">
    <p>Si, se acaba rapidín <time>9:39&thinsp;p.m. <svg class="seen" viewBox="0 0 54 38" role="img" aria-label="Recibido"><use href="#ticks"/></svg></time></p>
    <svg class="tail" viewBox="-14 -52 34 52" aria-hidden="true"><use href="#tail"/></svg>
  </article>

  <article class="msg in">
    <blockquote>
      <strong>Tú</strong>
      <span>Entonces me cuentas cómo te va?</span>
    </blockquote>
    <p>Claro que sii! Te estaré<br>
      contando cuando esté por<br>
      terminarlo para encargarte, si<br>
      Lucy no ha traído para<br>
      entonces!! <svg class="emoji" viewBox="0 0 60 60" role="img" aria-label="Cara de alivio">
        <circle cx="30" cy="30" r="29" fill="url(#face)"/>
        <g class="lines">
          <path d="M10,20 Q14,15 21,16 M39,16 Q46,15 50,20"/>
          <path d="M11,27 Q18,34 25,27 M35,27 Q42,34 49,27"/>
          <path d="M22,43 Q30,51 38,43"/>
        </g>
      </svg> Feliz noche Dios<br>
      te guarde!! <time>9:47&thinsp;p.m.</time></p>
    <svg class="tail" viewBox="-14 -52 34 52" aria-hidden="true"><use href="#tail"/></svg>
  </article>
  <button class="reaction" type="button" aria-label="Reacción: corazón">
    <svg viewBox="0 0 54 54" aria-hidden="true"><path fill="url(#love)" d="M27,53 C17,42 1,32 1,16 C1,6 7,1 14,1 C20,1 25,5 27,12 C29,5 34,1 40,1 C47,1 53,6 53,16 C53,32 37,42 27,53 Z"/></svg>
  </button>

  <h2 class="day">Hoy</h2>

  <article class="msg out wide">
    <p>Holuu, buenos días, Ana,<br>
      cuéntame, cómo vas con tu<br>
      colágeno? <time>8:26&thinsp;a.m. <svg class="seen" viewBox="0 0 54 38" role="img" aria-label="Recibido"><use href="#ticks"/></svg></time></p>
    <svg class="tail" viewBox="-14 -52 34 52" aria-hidden="true"><use href="#tail"/></svg>
  </article>

  <article class="msg in">
    <p>Hola Karen bien gracias a<br>
      Dios!<br>
      Súper lo estoy tomando <svg class="emoji" viewBox="0 0 60 60" role="img" aria-label="Cara sonriente">
        <circle cx="30" cy="30" r="29" fill="url(#face)"/>
        <circle cx="13" cy="35" r="11" fill="url(#blush)"/>
        <circle cx="47" cy="35" r="11" fill="url(#blush)"/>
        <g class="lines">
          <path d="M11,20 Q15,15 22,17 M38,17 Q45,15 49,20"/>
          <path d="M15,31 Q20,25 25,31 M35,31 Q40,25 45,31"/>
          <path d="M22,43 Q30,51 38,43"/>
        </g>
      </svg><br>
      <time class="below">12:14&thinsp;p.m.</time></p>
    <svg class="tail" viewBox="-14 -52 34 52" aria-hidden="true"><use href="#tail"/></svg>
  </article>

  <article class="msg out">
    <p>Me alegro!! <time>12:17&thinsp;p.m. <svg class="seen" viewBox="0 0 54 38" role="img" aria-label="Recibido"><use href="#ticks"/></svg></time></p>
    <svg class="tail" viewBox="-14 -52 34 52" aria-hidden="true"><use href="#tail"/></svg>
  </article>
</main>
<footer></footer>
</body>
</html>
```
FILE: styles.css
```
html, body {
  margin: 0;
  padding: 0;
}
body {
  display: flex;
  flex-direction: column;
  height: 100vh;
  overflow: hidden;
  background: #090909;
  color: #fafcfa;
  font-family: Inter, "Liberation Sans", sans-serif;
  font-size: 55px;
  font-weight: 550;
  line-height: 72px;
}
.defs {
  position: absolute;
  width: 0;
  height: 0;
}

/* Doodles behind the chat */
.wallpaper {
  position: absolute;
  z-index: -1;
  width: 100%;
  height: 100%;
  fill: none;
  stroke: #202020;
  stroke-width: 3px;
  stroke-linejoin: round;
  stroke-linecap: round;
}
.wallpaper * {
  vector-effect: non-scaling-stroke;
}
.wallpaper text {
  font-size: 48px;
}

/* Messages: the newest sit at the bottom */
.chat {
  flex: 1 1 auto;
  display: flex;
  flex-direction: column;
  justify-content: flex-end;
  align-items: flex-start;
  min-height: 0;
  overflow: hidden;
  padding: 0 50px 23px 40px;
}
.msg {
  position: relative;
  flex: none;
  box-sizing: border-box;
  margin-top: 40px;
  padding: 16px 30px 13px 28px;
  border-radius: 35px;
}
.msg.in {
  background: #242625;
  fill: #242625;
}
.msg.out {
  align-self: flex-end;
  background: #144d37;
  fill: #144d37;
}
.msg.tight {
  margin-top: 13px;
}
.msg.wide {
  min-width: 74%;
}
.msg.older {
  width: 80%;
  height: 120px;
}
.msg p {
  display: flow-root;
  margin: 0;
}
.tail {
  position: absolute;
  bottom: 0;
  right: -20px;
  width: 34px;
  height: 52px;
}
.in .tail {
  right: auto;
  left: -20px;
  transform: scaleX(-1);
}

time {
  float: right;
  margin-top: 36px;
  margin-left: 44px;
  color: #a1a3a2;
  font-size: 42px;
  font-weight: 500;
  font-variant-numeric: tabular-nums;
  line-height: 48px;
}
.out time {
  color: #a1b9ae;
}
time.below {
  margin-top: 15px;
}
.seen {
  width: 54px;
  height: 38px;
  vertical-align: -3px;
  fill: none;
  stroke: #a1b9ae;
  stroke-width: 5px;
  stroke-linecap: round;
  stroke-linejoin: round;
}
.emoji {
  width: 60px;
  height: 60px;
  margin: 0 4px;
  vertical-align: -11px;
}
.lines {
  fill: none;
  stroke: #7a4208;
  stroke-width: 3px;
  stroke-linecap: round;
}

/* Quoted message */
blockquote {
  display: flex;
  flex-direction: column;
  margin: -6px -20px 16px -18px;
  padding: 28px 40px 30px;
  border-radius: 22px;
  background: linear-gradient(90deg, #dea684 12px, #1e1e1e 12px);
  color: #cfcfcf;
  font-size: 44px;
  line-height: 68px;
}
blockquote strong {
  color: #dea684;
  font-size: 50px;
  font-weight: 800;
  line-height: 66px;
}

.reaction {
  display: flex;
  flex: none;
  align-items: center;
  justify-content: center;
  position: relative;
  width: 108px;
  height: 78px;
  box-sizing: content-box;
  margin: -10px 0 0 28px;
  padding: 0;
  border: 3px solid #0c0e0d;
  border-radius: 42px;
  background: #242625;
}
.reaction svg {
  width: 54px;
  height: 54px;
}

.day {
  align-self: center;
  flex: none;
  margin: 107px 0 2px;
  padding: 0 103px;
  border-radius: 24px;
  background: #171717;
  font-size: 45px;
  font-weight: 700;
  line-height: 62px;
}

footer {
  flex: none;
  height: 16px;
  background: #0f0f0f;
}
```
